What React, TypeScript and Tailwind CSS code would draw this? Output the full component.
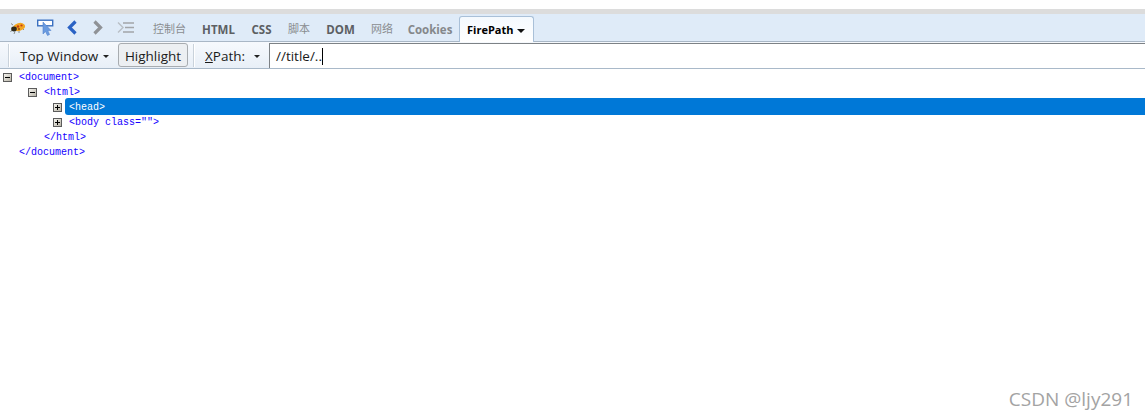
const font = { sans: "font-['Open_Sans','Noto_Sans_CJK_SC',sans-serif]" };

function Bug() {
  return (
    <svg width="16" height="14" viewBox="0 0 16 14" className="shrink-0">
      <g stroke="#77776a" strokeWidth="0.8" fill="none">
        <path d="M3 4 L1 2.5 M2 9 L0.5 11 M5 10.5 L4 13 M9 9 L9 12 M12 7 L14 9" />
      </g>
      <ellipse cx="9" cy="6" rx="6.2" ry="4" fill="#f2a522" transform="rotate(-15 9 6)" />
      <ellipse cx="4" cy="8" rx="2.8" ry="2.4" fill="#2f2a1c" />
      <circle cx="8" cy="5.5" r="1.2" fill="#c43d12" />
      <circle cx="11.5" cy="4.5" r="1.1" fill="#c43d12" />
      <circle cx="9" cy="8" r="0.9" fill="#8a4a10" />
    </svg>
  );
}

function Inspect() {
  return (
    <svg width="18" height="18" viewBox="0 0 18 18" className="shrink-0">
      <rect x="0.7" y="1.2" width="15" height="5.6" fill="#fff" stroke="#3a70c0" strokeWidth="1.4" />
      <path d="M6 3 L6 15 L8.5 12.5 L10.5 16.5 L12.5 15.5 L10.8 11.5 L14 11.5 Z" fill="#6a9be0" stroke="#5585cf" strokeWidth="0.6" />
    </svg>
  );
}

function Chevron({ dir, color }: { dir: "left" | "right"; color: string }) {
  const d = dir === "left" ? "M9.5 1.5 L3.5 7.5 L9.5 13.5" : "M2.5 1.5 L8.5 7.5 L2.5 13.5";
  return (
    <svg width="12" height="15" viewBox="0 0 12 15" className="shrink-0">
      <path d={d} fill="none" stroke={color} strokeWidth="3.2" />
    </svg>
  );
}

function CommandLine() {
  return (
    <svg width="17" height="11" viewBox="0 0 17 11" className="shrink-0">
      <path d="M1 0.5 L6 5.5 L1 10.5" fill="none" stroke="#b9bfc5" strokeWidth="1.4" />
      <path d="M6 1 H17 M8 5.5 H17 M6 10 H17" stroke="#a2a5a8" strokeWidth="1.5" />
    </svg>
  );
}

function Caret() {
  return <span className="block w-0 h-0 border-x-[3px] border-x-transparent border-t-[3px] border-t-[#222]" />;
}

function Sep() {
  return <span className="block w-px h-[23px] bg-[#c9d2db] shadow-[1px_0_0_#fff]" />;
}

function Expander({ open }: { open?: boolean }) {
  return (
    <span className="relative w-[9px] h-[9px] border border-[#5c5c5c] bg-gradient-to-br from-[#f4f3ee] to-[#b9b5a8] shrink-0">
      <span className="absolute left-[1px] top-[3px] w-[5px] h-px bg-black" />
      {!open && <span className="absolute left-[3px] top-[1px] w-px h-[5px] bg-black" />}
    </span>
  );
}

function Code({ children }: { children: string }) {
  return <span className="text-[#1500ff] whitespace-pre">{children}</span>;
}

const tabs = [
  { label: "控制台", cls: "w-[33px] font-normal text-[11px] text-[#8a8d90]" },
  { label: "HTML", cls: "w-[33px] text-[#5c5f63]" },
  { label: "CSS", cls: "w-[21px] text-[#5c5f63]" },
  { label: "脚本", cls: "w-[22px] font-normal text-[11px] text-[#8a8d90]" },
  { label: "DOM", cls: "w-[29px] text-[#5c5f63]" },
  { label: "网络", cls: "w-[22px] font-normal text-[11px] text-[#8a8d90]" },
  { label: "Cookies", cls: "w-[42px] text-[#85888b]" },
];

export default function App() {
  return (
    <div className={`relative w-[1145px] h-[420px] bg-white overflow-hidden ${font.sans}`}>
      <div className="h-[9px] bg-white" />
      <div className="h-[5px] bg-[#dcdcdc]" />

      {/* tab strip */}
      <div className="h-[28px] flex items-end bg-[#dfebf8] border-b border-[#a9b7c6]">
        <div className="h-[27px] flex items-center pl-[10px]">
          <Bug />
          <span className="w-[11px]" />
          <Inspect />
          <span className="w-[11px]" />
          <Chevron dir="left" color="#2a62c4" />
          <span className="w-[14px]" />
          <Chevron dir="right" color="#8f9296" />
          <span className="w-[13px]" />
          <CommandLine />
        </div>
        <div className="h-[27px] pt-[4px] flex items-center gap-[16px] ml-[19px] text-[11.5px] font-bold">
          {tabs.map((t) => (
            <span key={t.label} className={`${t.cls} whitespace-nowrap flex justify-center`}>
              {t.label}
            </span>
          ))}
        </div>
        <div className="ml-[8px] w-[75px] h-[26px] pt-[2px] pl-[7px] -mb-px bg-gradient-to-b from-[#f4f9fe] to-white border border-b-0 border-[#a9c0d8] rounded-t-[3px] flex items-center gap-[4px] text-[11px] font-bold text-black">
          FirePath
          <span className="inline-block w-0 h-0 border-x-[4px] border-x-transparent border-t-[4px] border-t-[#111]" />
        </div>
      </div>

      {/* toolbar */}
      <div className="h-[27px] flex items-center bg-gradient-to-b from-[#f6f9fd] to-[#e8eff7] border-b border-[#a9b9c9] pl-[8px] text-[13.5px] text-[#1a1a1a]">
        <Sep />
        <span className="ml-[11px] pt-[2px] w-[77px] whitespace-nowrap">Top Window</span>
        <span className="ml-[6px] pt-[2px]"><Caret /></span>
        <button className="ml-[9px] w-[70px] h-[24px] pt-[2px] rounded-[3px] border border-[#a8acb0] bg-[#eceff2] text-[13.5px] text-[#1a1a1a] flex items-center justify-center">
          Highlight
        </button>
        <span className="ml-[5px]"><Sep /></span>
        <span className="ml-[11px] pt-[2px] w-[41px] whitespace-nowrap"><span className="underline">X</span>Path:</span>
        <span className="ml-[8px] pt-[2px]"><Caret /></span>
        <div className="ml-[9px] flex-1 h-[25px] -mb-px bg-white border-t border-l border-[#7d8286] flex items-center pl-[6px] text-[13.5px] text-[#1a1a1a]">
          //title/..
          <span className="w-px h-[17px] bg-black" />
        </div>
      </div>

      {/* tree */}
      <div className="pt-[1px] font-['Liberation_Mono',monospace] text-[10px] leading-[15px]">
        <div className="h-[15px] flex items-center pl-[3px]">
          <Expander open />
          <span className="ml-[7px]"><Code>{"<document>"}</Code></span>
        </div>
        <div className="h-[15px] flex items-center pl-[28px]">
          <Expander open />
          <span className="ml-[7px]"><Code>{"<html>"}</Code></span>
        </div>
        <div className="h-[15px] flex items-center pl-[53px]">
          <Expander />
          <span className="ml-[3px] mb-[2px] pt-[2px] flex-1 h-[17px] bg-[#0078d7] rounded-l-[3px] pl-[4px] flex items-center text-white whitespace-pre">
            {"<head>"}
          </span>
        </div>
        <div className="h-[15px] flex items-center pl-[53px]">
          <Expander />
          <span className="ml-[7px]"><Code>{'<body class="">'}</Code></span>
        </div>
        <div className="h-[15px] flex items-center pl-[44px]"><Code>{"</html>"}</Code></div>
        <div className="h-[15px] flex items-center pl-[19px]"><Code>{"</document>"}</Code></div>
      </div>

      {/* watermark */}
      <span className="absolute right-[12px] bottom-[9px] text-[19px] leading-[24px] text-[#a3a3a3] font-['Open_Sans',sans-serif]">
        CSDN @ljy291
      </span>
    </div>
  );
}
